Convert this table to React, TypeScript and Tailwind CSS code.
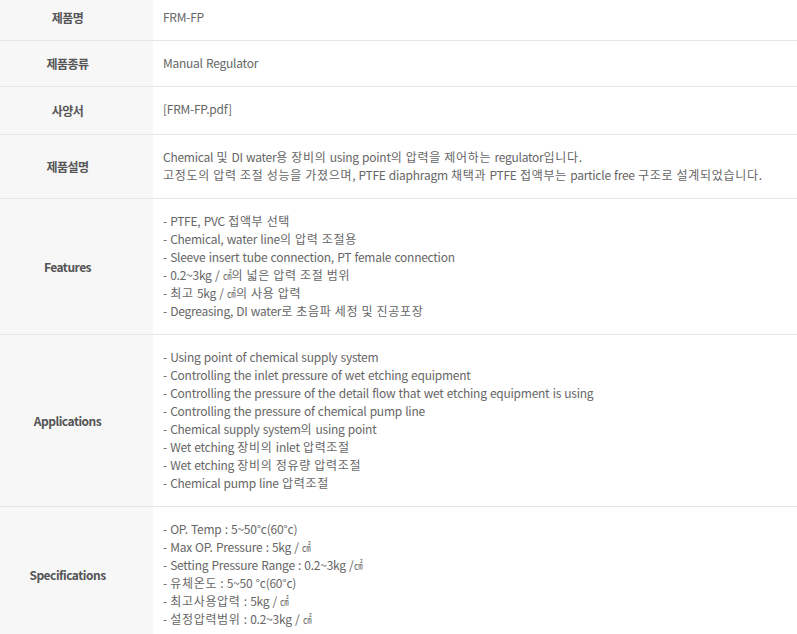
import React from "react";

type Row = { label: string; lines: string[]; extra?: boolean };

const rows: Row[] = [
  { label: "제품명", lines: ["FRM-FP"] },
  { label: "제품종류", lines: ["Manual Regulator"] },
  { label: "사양서", lines: ["[FRM-FP.pdf]"], extra: true },
  {
    label: "제품설명",
    lines: [
      "Chemical 및 DI water용 장비의 using point의 압력을 제어하는 regulator입니다.",
      "고정도의 압력 조절 성능을 가졌으며, PTFE diaphragm 채택과 PTFE 접액부는 particle free 구조로 설계되었습니다.",
    ],
  },
  {
    label: "Features",
    lines: [
      "- PTFE, PVC 접액부 선택",
      "- Chemical, water line의 압력 조절용",
      "- Sleeve insert tube connection, PT female connection",
      "- 0.2~3kg / ㎠의 넓은 압력 조절 범위",
      "- 최고 5kg / ㎠의 사용 압력",
      "- Degreasing, DI water로 초음파 세정 및 진공포장",
    ],
  },
  {
    label: "Applications",
    lines: [
      "- Using point of chemical supply system",
      "- Controlling the inlet pressure of wet etching equipment",
      "- Controlling the pressure of the detail flow that wet etching equipment is using",
      "- Controlling the pressure of chemical pump line",
      "- Chemical supply system의 using point",
      "- Wet etching 장비의 inlet 압력조절",
      "- Wet etching 장비의 정유량 압력조절",
      "- Chemical pump line 압력조절",
    ],
  },
  {
    label: "Specifications",
    lines: [
      "- OP. Temp : 5~50°c(60°c)",
      "- Max OP. Pressure : 5kg / ㎠",
      "- Setting Pressure Range : 0.2~3kg /㎠",
      "- 유체온도 : 5~50 °c(60°c)",
      "- 최고사용압력 : 5kg / ㎠",
      "- 설정압력범위 : 0.2~3kg / ㎠",
    ],
  },
];

function Rich({ text }: { text: string }) {
  const parts = text.split(/([\uAC00-\uD7A3]+|㎠)/);
  return (
    <>
      {parts.map((p, i) => {
        if (!p) return null;
        if (p === "㎠")
          return (
            <span key={i} className="inline-block w-[9px] overflow-visible">
              <span className="inline-block origin-left scale-x-[0.72]">㎠</span>
            </span>
          );
        if (/[\uAC00-\uD7A3]/.test(p))
          return (
            <span key={i} className="tracking-[0.7px]">
              {p}
            </span>
          );
        return <span key={i}>{p}</span>;
      })}
    </>
  );
}

export default function App() {
  return (
    <div
      className="w-[797px] h-[634px] overflow-hidden bg-white"
      style={{ fontFamily: '"Noto Sans CJK KR", "Noto Sans", sans-serif' }}
    >
      <div className="-mt-[5px] flex flex-col">
        {rows.map((r, i) => (
          <div key={i} className="flex border-b border-[#e5e5e5]">
            <div className="w-[153px] shrink-0 bg-[#f7f7f7] flex items-center justify-center pr-[18px] text-[12px] font-bold tracking-[-0.5px] text-[#555]">
              {r.label}
            </div>
            <div
              className={
                r.extra
                  ? "flex-1 pl-[10px] pt-[13px] pb-[16px] text-[12px] leading-[18px] tracking-[-0.25px] [word-spacing:0.8px] text-[#666]"
                  : "flex-1 pl-[10px] pt-[13px] pb-[14px] text-[12px] leading-[18px] tracking-[-0.25px] [word-spacing:0.8px] text-[#666]"
              }
            >
              {r.lines.map((l, j) => (
                <div key={j} className="whitespace-nowrap">
                  <Rich text={l} />
                </div>
              ))}
            </div>
          </div>
        ))}
      </div>
    </div>
  );
}
